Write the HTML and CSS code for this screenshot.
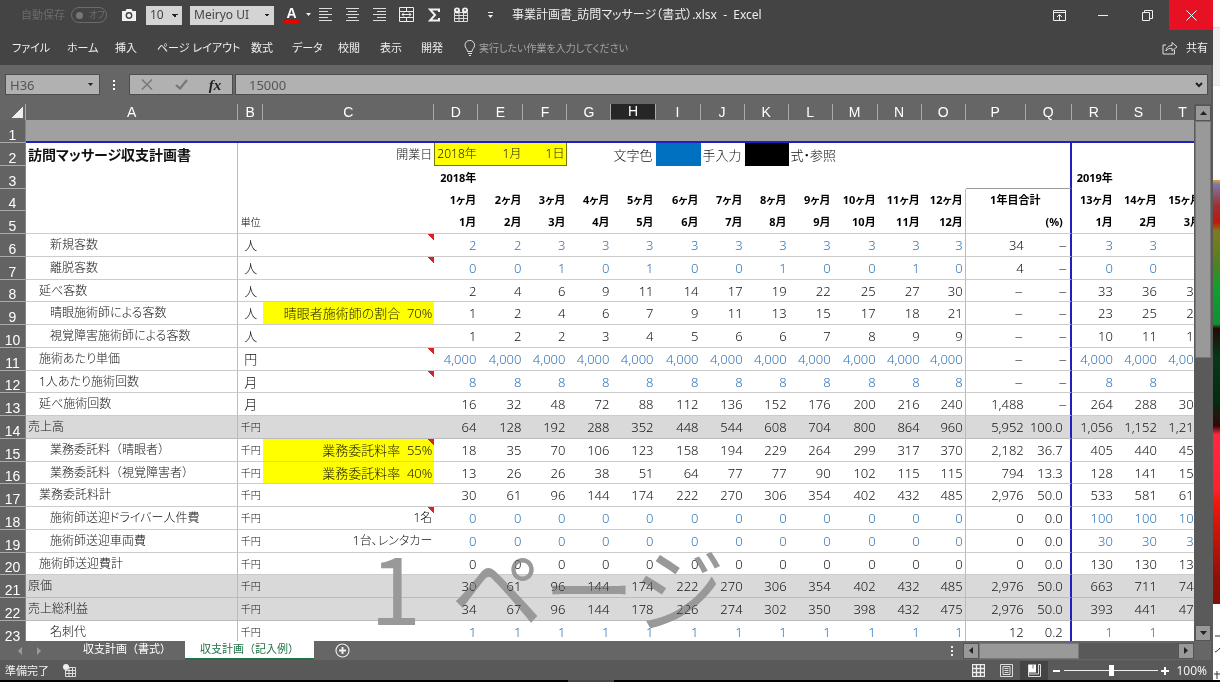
FILE: index.html
```html
<!DOCTYPE html>
<html lang="ja">
<head>
<meta charset="utf-8">
<title>事業計画書_訪問マッサージ（書式）.xlsx - Excel</title>
<link rel="stylesheet" href="styles.css">
</head>
<body>
<div class="desktop">
  <div class="window">
    <header class="titlebar">
      <div class="quick">
        <label class="autosave-label" for="autosave">自動保存</label>
        <span class="toggle"><input type="checkbox" id="autosave" disabled><span>オフ</span></span>
        <button class="icon" aria-label="カメラ"><svg width="16" height="14" viewBox="0 0 16 14"><path d="M1 3h3.5l1-2h5l1 2H15v10H1z" fill="#f2f2f2"/><circle cx="8" cy="7.5" r="3.4" fill="#444"/><circle cx="8" cy="7.5" r="2" fill="#f2f2f2"/></svg></button>
        <select class="size-select" aria-label="フォント サイズ"><option>10</option></select>
        <select class="font-select" aria-label="フォント"><option>Meiryo UI</option></select>
        <button class="icon font-color" aria-label="フォントの色">A</button>
        <button class="icon" aria-label="色の一覧"><svg width="6" height="4" viewBox="0 0 6 4"><path d="M0 0h5L2.500 3z" fill="#eee"/></svg></button>
        <button class="icon" aria-label="左揃え"><svg width="14" height="14" viewBox="0 0 14 14"><path d="M0 .5h13M0 3.500h9M0 6.500h13M0 9.500h9M0 12.500h13" stroke="#ddd"/></svg></button>
        <button class="icon" aria-label="中央揃え"><svg width="14" height="14" viewBox="0 0 14 14"><path d="M0 .5h13M2 3.500h9M0 6.500h13M2 9.500h9M0 12.500h13" stroke="#ddd"/></svg></button>
        <button class="icon" aria-label="右揃え"><svg width="14" height="14" viewBox="0 0 14 14"><path d="M0 .5h13M4 3.500h9M0 6.500h13M4 9.500h9M0 12.500h13" stroke="#ddd"/></svg></button>
        <button class="icon" aria-label="セルを結合"><svg width="16" height="16" viewBox="0 0 16 16" fill="none" stroke="#eee"><path d="M.5.5h14v14H.5zM.5 4.500h14M.5 10.500h14M7.500 .5v4M7.500 10.500v4M3 7.500h9M5 5.500l-2 2 2 2M10 5.500l2 2-2 2"/></svg></button>
        <button class="icon" aria-label="合計"><svg width="13" height="14" viewBox="0 0 13 14"><path d="M11 4V1.500H2L7 7l-5 5.500h9V10" fill="none" stroke="#f2f2f2" stroke-width="2"/></svg></button>
        <button class="icon" aria-label="ピボットテーブル"><svg width="17" height="16" viewBox="0 0 17 16"><path d="M1.500 5.500h13v9h-13zM1.500 8.500h13M1.500 11.500h13M6 5v10M10.500 5v10" fill="none" stroke="#ddd"/><circle cx="4" cy="3.500" r="3" fill="#eee"/><circle cx="12" cy="3.500" r="3" fill="#eee"/><circle cx="4" cy="3" r="1" fill="#555"/><circle cx="12" cy="3" r="1" fill="#555"/></svg></button>
        <button class="icon" aria-label="クイック アクセスのカスタマイズ"><svg width="6" height="7" viewBox="0 0 6 7"><path d="M0 .5h5" stroke="#eee"/><path d="M0 3h5L2.500 6z" fill="#eee"/></svg></button>
        <h1 class="doc-title">事業計画書_訪問マッサージ（書式）.xlsx&nbsp; -&nbsp; Excel</h1>
      </div>
      <div class="caption">
        <button aria-label="リボンの表示オプション"><svg width="13" height="11" viewBox="0 0 13 11" fill="none" stroke="#eee"><path d="M.5.5h12v10H.5zM.5 2.500h12M6.500 10V4.500M4 7l2.500-2.500L9 7"/></svg></button>
        <button aria-label="最小化"><svg width="11" height="3" viewBox="0 0 11 3"><path d="M0 1.500h10" stroke="#eee"/></svg></button>
        <button aria-label="元に戻す"><svg width="11" height="11" viewBox="0 0 11 11" fill="none" stroke="#eee"><path d="M.5 2.500h7v8h-7zM2.500 2.500v-2h8v8h-3"/></svg></button>
        <button class="close" aria-label="閉じる"><svg width="11" height="11" viewBox="0 0 11 11"><path d="M.5.5l10 10M10.500.5l-10 10" stroke="#fff"/></svg></button>
      </div>
    </header>

    <nav class="ribbon">
      <div class="tabs">
        <button>ファイル</button><button>ホーム</button><button>挿入</button><button>ページ レイアウト</button><button>数式</button><button>データ</button><button>校閲</button><button>表示</button><button>開発</button>
      </div>
      <label class="tell">
        <svg width="12" height="16" viewBox="0 0 12 16" fill="none" stroke="#ddd"><path d="M3.500 11.500C3.500 9 1 8 1 5.200a4.800 4.800 0 0 1 9.600 0C10.600 8 8 9 8 11.500zM4 13.500h4M5 15.500h2"/></svg>
        <input type="text" placeholder="実行したい作業を入力してください" aria-label="操作アシスト">
      </label>
      <button class="share"><svg width="17" height="15" viewBox="0 0 17 15" fill="none" stroke="#ddd"><path d="M4 5H1v9h11.500v-4M4 11c.5-4 3-5.500 6-5.500V2.500L15 6.800 10 11V8.300c-2.500 0-4.500.5-6 2.700z"/></svg>共有</button>
    </nav>

    <div class="formula">
      <div class="namebox"><input type="text" value="H36" aria-label="名前ボックス"><button aria-label="名前の一覧"><svg width="6" height="4" viewBox="0 0 6 4"><path d="M0 0h5L2.500 3z" fill="#222"/></svg></button></div>
      <svg class="dots" width="4" height="12" viewBox="0 0 4 12"><path d="M1 1h2v2H1zM1 5h2v2H1zM1 9h2v2H1z" fill="#fff"/></svg>
      <div class="fx">
        <button aria-label="キャンセル"><svg width="12" height="11" viewBox="0 0 12 11"><path d="M1 .5l10 10M11 .5l-10 10" stroke="#777" stroke-width="1.500"/></svg></button>
        <button aria-label="入力"><svg width="13" height="11" viewBox="0 0 13 11"><path d="M1 6l4 3.500L12 1" fill="none" stroke="#777" stroke-width="2.200"/></svg></button>
        <button class="fn" aria-label="関数の挿入">fx</button>
      </div>
      <div class="entry"><input type="text" value="15000" aria-label="数式バー"><button aria-label="数式バーの展開"><svg width="8" height="6" viewBox="0 0 8 6"><path d="M1 1l3 3 3-3" fill="none" stroke="#222" stroke-width="2"/></svg></button></div>
    </div>

    <main class="work">
      <div class="sheet">
        <table class="grid">
          <colgroup id="cols"></colgroup>
          <thead><tr id="letters"></tr></thead>
          <tbody id="rows"></tbody>
        </table>
        <div class="watermark"><span>1</span><span>ページ</span></div>
      </div>
      <div class="vscroll">
        <button aria-label="上へ"><svg width="7" height="4" viewBox="0 0 7 4"><path d="M0 4h7L3.500 0z" fill="#222"/></svg></button>
        <div class="vtrack"><div class="vthumb"></div></div>
        <button aria-label="下へ"><svg width="7" height="4" viewBox="0 0 7 4"><path d="M0 0h7L3.500 4z" fill="#222"/></svg></button>
      </div>
    </main>

    <div class="sheetbar">
      <div class="arrows">
        <button aria-label="前のシート"><svg width="5" height="8" viewBox="0 0 5 8"><path d="M4 0v8L0 4z" fill="#9a9a9a"/></svg></button>
        <button aria-label="次のシート"><svg width="5" height="8" viewBox="0 0 5 8"><path d="M0 0v8l4-4z" fill="#9a9a9a"/></svg></button>
      </div>
      <button class="tab">収支計画（書式）</button>
      <button class="tab active">収支計画（記入例）</button>
      <button class="add" aria-label="新しいシート"><svg width="15" height="15" viewBox="0 0 15 15" fill="none" stroke="#eee"><circle cx="7.500" cy="7.500" r="6.500" stroke-width="1.200"/><path d="M7.500 4v7M4 7.500h7" stroke-width="2"/></svg></button>
      <svg class="dots" width="4" height="12" viewBox="0 0 4 12"><path d="M1 1h2v2H1zM1 5h2v2H1zM1 9h2v2H1z" fill="#eee"/></svg>
      <div class="hscroll">
        <button aria-label="左へ"><svg width="4" height="7" viewBox="0 0 4 7"><path d="M4 0v7L0 3.500z" fill="#222"/></svg></button>
        <div class="htrack"><div class="hthumb"></div></div>
        <button aria-label="右へ"><svg width="4" height="7" viewBox="0 0 4 7"><path d="M0 0v7l4-3.500z" fill="#222"/></svg></button>
      </div>
    </div>

    <footer class="status">
      <span>準備完了</span>
      <button class="macro" aria-label="マクロの記録"><svg width="14" height="13" viewBox="0 0 14 13"><path d="M2.500 3.500h10v9h-10zM3 6.500h10M3 9.500h10M6 4v8M9.500 4v8" fill="none" stroke="#ddd"/><circle cx="3" cy="3" r="3" fill="#eee"/></svg></button>
      <div class="views">
        <button aria-label="標準"><svg width="13" height="13" viewBox="0 0 13 13"><path d="M.5.5h12v12H.5zM.5 4.500h12M.5 8.500h12M4.500.5v12M8.500.5v12" fill="none" stroke="#eee" stroke-width="1.300"/></svg></button>
        <button aria-label="ページ レイアウト"><svg width="13" height="13" viewBox="0 0 13 13" fill="none" stroke="#ddd"><path d="M.5.5h12v12H.5zM3 2.500h7v8H3zM4.500 4.500h4M4.500 6.500h4M4.500 8.500h4"/></svg></button>
        <button class="on" aria-label="改ページ プレビュー"><svg width="13" height="13" viewBox="0 0 13 13"><path d="M1 .5h7v8H1z" fill="#fff"/><path d="M5 .5v4" stroke="#777"/><path d="M.5 .5v12h12V.5h-2v9.500H.5" fill="none" stroke="#ddd"/></svg></button>
      </div>
      <div class="zoom">
        <button aria-label="縮小"><svg width="8" height="8" viewBox="0 0 8 8"><path d="M0 4h7" stroke="#fff" stroke-width="2"/></svg></button>
        <input type="range" min="0" max="100" value="50" aria-label="ズーム">
        <button aria-label="拡大"><svg width="8" height="8" viewBox="0 0 8 8"><path d="M0 4h8M4 0v8" stroke="#fff" stroke-width="2"/></svg></button>
        <span>100%</span>
      </div>
    </footer>
  </div>
  <aside class="behind">
    <div class="behind-top"></div>
    <div class="photo"></div>
    <svg class="scrap" width="7" height="76" viewBox="0 0 7 76" fill="none" stroke="#333"><path d="M2 32h5M2 48q3-1 5-4M1 70h6M4 67v8"/></svg>
  </aside>
</div>
<div class="taskbar"><span></span></div>
<script src="app.js"></script>
</body>
</html>
```
FILE: styles.css
```css
* { box-sizing: border-box; }
body {
  margin: 0;
  height: 100vh;
  display: flex;
  flex-direction: column;
  overflow: hidden;
  background: #000;
  color: #eee;
  font: 12px/16px "Noto Sans", "Noto Sans CJK JP", sans-serif;
  font-feature-settings: "palt";
}
button, input, select {
  font: inherit;
  font-feature-settings: inherit;
  color: inherit;
  background: none;
  border: 0;
  margin: 0;
  padding: 0;
  border-radius: 0;
  min-width: 0;
}
button { display: flex; align-items: center; justify-content: center; white-space: nowrap; }
svg { display: block; flex: none; }

.desktop { flex: 1; display: flex; min-height: 0; background: #fff; }
.window { flex: 1; min-width: 0; display: flex; flex-direction: column; background: #666; border-right: 2px solid #5a5a5a; }

/* Title bar */
.titlebar { display: flex; height: 30px; background: #444; margin-right: -2px; }
.quick {
  flex: 1;
  display: grid;
  grid-template-columns: 50px 50px 25px 44px 94px 22px 13px 27px 27px 26px 29px 25px 35px 24px 1fr;
  align-items: center;
  justify-items: start;
  padding-left: 21px;
}
.autosave-label { color: #6c6c6c; font-size: 11px; }
.toggle { display: flex; align-items: center; gap: 6px; width: 36px; height: 16px; padding: 0 4px; border: 1px solid #6c6c6c; border-radius: 8px; color: #6c6c6c; font-size: 9px; line-height: 12px; white-space: nowrap; }
.toggle input { appearance: none; flex: none; width: 7px; height: 7px; border-radius: 50%; background: #777; }
.size-select, .font-select {
  appearance: none;
  height: 19px;
  padding-left: 4px;
  color: #444;
  background: #d4d4d4 no-repeat;
  background-image: linear-gradient(to bottom right, #222 50%, transparent 50%), linear-gradient(to bottom left, #222 50%, transparent 50%);
  background-size: 3px 3px;
  background-position: right 4px center, right 7px center;
}
.size-select { width: 36px; }
.font-select { width: 84px; }
.font-color { width: 15px; height: 17px; color: #fff; font: bold 14px/13px "Liberation Sans", sans-serif; border-bottom: 4px solid #e80000; }
.doc-title { margin: 0; font-size: 12px; font-weight: 400; white-space: nowrap; }
.caption { display: flex; }
.caption button { width: 44px; height: 30px; }
.caption .close { background: #e81123; }

/* Ribbon tabs */
.ribbon { display: flex; align-items: center; height: 35px; background: #444; padding: 0 5px 0 12px; margin-right: -2px; }
.tabs { display: grid; grid-template-columns: 55px 48px 42px 94px 41px 46px 42px 41px 43px; justify-items: start; font-size: 11px; }
.tell { flex: 1; display: flex; align-items: center; gap: 3px; color: #aaa; font-size: 10px; }
.tell input { flex: 1; }
.tell input::placeholder { color: #a4a4a4; opacity: 1; }
.share { gap: 7px; font-size: 11px; }

/* Formula bar */
.formula { display: flex; align-items: center; height: 39px; padding: 0 3px 0 5px; color: #555; font-size: 13px; }
.namebox, .fx, .entry { display: flex; height: 21px; background: #b1b1b1; border: 1px solid #4e4e4e; }
.namebox { width: 95px; }
.namebox input { flex: 1; padding-left: 4px; }
.namebox button { width: 16px; }
.formula .dots { margin: 0 13px 0 12px; }
.fx { width: 104px; }
.fx button { flex: 1; }
.fx .fn { color: #222; font: italic bold 15px/16px "Liberation Serif", serif; }
.entry { flex: 1; margin-left: 2px; }
.entry input { flex: 1; padding-left: 13px; }
.entry button { width: 16px; }

/* Worksheet */
.work { flex: 1; display: flex; min-height: 0; }
.sheet { position: relative; flex: 1; min-width: 0; overflow: hidden; background: #fff; }
.grid { width: 1205px; table-layout: fixed; border-collapse: separate; border-spacing: 0; color: #111; font-size: 13px; }
.c-head { width: 26px; }
.c-a { width: 212px; }
.c-b { width: 25px; }
.c-c { width: 171px; }
.c-44 { width: 44px; }
.c-45 { width: 45px; }
.c-p { width: 60px; }
.c-q { width: 46px; }
.grid th, .grid td { padding: 0 2px; white-space: nowrap; line-height: 16px; text-align: right; }
.grid td { font-weight: 300; }
.grid thead th { height: 16px; padding: 0; background: #666; color: #fff; text-align: center; font: 14px/15px "Liberation Sans", sans-serif; border-right: 1px solid #aaa; }
.grid thead .selected { background: #262626; border-bottom: 1px solid #217346; }
.grid thead .corner { background: #666 linear-gradient(135deg, transparent 50%, #eee 50%) no-repeat right 2px bottom 2px / 11px 11px; }
.grid tbody tr { height: 23px; }
.grid tbody tr:nth-child(4n) { height: 22px; }
.grid tbody th { padding: 0; background: #636363; color: #fff; text-align: center; vertical-align: bottom; font: 14px/14px "Liberation Sans", sans-serif; border-bottom: 1px solid #aaa; border-right: 1px solid #7c7cc0; }
.grid td.a { text-align: left; font-size: 12px; border-right: 1px solid #bbb; }
.grid td.b { text-align: center; }
.grid td.o { border-right: 1px solid #bbb; }
.grid td.q { padding-right: 7px; border-right: 2px solid #2020c0; }
.grid td.r, .grid td.s, .grid td.t { padding-right: 4px; }
.grid .r1 td { background: #a0a0a0; border-right: 0; border-bottom: 2px solid #2020c0; }
.grid .line td { border-bottom: 1px solid #ccc; }
.grid .r1 td.o, .grid .r2 td.o, .grid .r3 td.o, .grid .r1 td.q { border-right: 0; }
.grid .r3 td.p, .grid .r3 td.q { border-bottom: 1px solid #999; }
.grid .sum td { background: #d9d9d9; border-bottom-color: #bbb; }
.grid .bold td { font-size: 11px; font-weight: 700; color: #000; }
.grid td.input { color: #2f72b8; }
.grid td.unit { font-size: 10px; }
.grid .bold td.unit { font-size: 10px; font-weight: 300; }
.grid td.i1 { padding-left: 13px; }
.grid td.i2 { padding-left: 24px; }
.grid td.wide { font-feature-settings: normal; }
.grid td.dash { color: #666; padding-right: 3px; font-size: 16px; }
.grid td.left { text-align: left; }
.grid td.heading { font-size: 14px; font-weight: 700; }
.grid td.center { text-align: center; }
.grid td.yellow { background-color: #ff0; color: #222200; }
.grid td.date { font-size: 12px; border-bottom: 1px solid #777700; }
.grid td.date.last { border-right: 1px solid #777700; }
.grid td.date.first { border-left: 1px solid #777700; }
.grid td.legend { padding-right: 4px; }
.grid td.small { font-size: 12px; }
.grid td.blue { background: #0070c0; }
.grid td.black { background: #000; }
.grid td.note { background-image: linear-gradient(45deg, transparent 50%, #e02020 50%); background-repeat: no-repeat; background-position: right top; background-size: 7px 6px; }
.watermark { position: absolute; left: 370px; top: 421px; display: flex; gap: 30px; color: #999; font: 400 92px/120px "Noto Sans CJK JP", sans-serif; font-feature-settings: normal; white-space: nowrap; mix-blend-mode: darken; pointer-events: none; }

/* Scroll bars */
.vscroll { width: 17px; display: flex; flex-direction: column; background: #5a5a5a; padding: 1px 0 0 1px; }
.vscroll button, .hscroll button { width: 16px; height: 16px; background: #999; border: 1px solid #555; }
.vtrack { flex: 1; }
.vthumb { height: 47%; background: #999; border: 1px solid #777; }

/* Sheet tabs */
.sheetbar { display: flex; align-items: center; height: 20px; padding-right: 17px; border-bottom: 1px solid #5a5a5a; }
.arrows { display: flex; gap: 14px; width: 69px; padding-left: 18px; }
.tab { align-self: stretch; width: 116px; align-items: flex-start; font-size: 11px; font-feature-settings: normal; color: #fff; }
.tab.active { width: 129px; background: #fff; color: #217346; border-bottom: 2px solid #217346; }
.add { margin-left: 21px; }
.sheetbar .dots { margin: 0 9px 0 auto; }
.hscroll { display: flex; width: 231px; background: #595959; }
.htrack { flex: 1; }
.hthumb { width: 50%; height: 16px; background: #999; border: 1px solid #777; }

/* Status bar */
.status { display: flex; align-items: center; height: 19px; padding: 0 4px 0 5px; background: #595959; font-size: 11px; color: #f2f2f2; }
.macro { margin-left: 14px; }
.views { display: flex; margin-left: auto; }
.views button { width: 28px; height: 19px; }
.views .on { background: #444; }
.zoom { display: flex; align-items: center; gap: 3px; margin-left: 5px; }
.zoom input { appearance: none; width: 94px; height: 13px; background: linear-gradient(#eee, #eee) no-repeat center / 100% 1px; }
.zoom input::-webkit-slider-thumb { appearance: none; width: 5px; height: 11px; background: #fff; }
.zoom span { margin-left: 4px; font-size: 12px; }

/* Neighbouring window and task bar */
.behind { width: 7px; display: flex; flex-direction: column; background: #fff; }
.behind-top { height: 180px; background: linear-gradient(#fff 27px, #ccc 27px, #f0f0f0 28px, #f0f0f0 85px, #ccc 85px, #fff 86px); }
.photo { flex: 1; background: linear-gradient(#e8a030 0, #7c78b0 1%, #a03030 6%, #c01808 10%, #807a20 12%, #508020 20%, #10a030 25%, #109030 34%, #200a08 35%, #063818 42%, #042c10 52%, #300808 58%, #ff2840 60%, #ff2030 73%, #f01808 76%, #901008 94%, #801008 100%); }
.taskbar { height: 2px; background: #000; }
.taskbar span { display: block; width: 46px; height: 2px; margin-left: 568px; background: #444; }
```
FILE: app.js
```js
const letters = 'ABCDEFGHIJKLMNOPQRST'.split('');
const widths = ['c-head', 'c-a', 'c-b', 'c-c',
  'c-44', 'c-45', 'c-44', 'c-44', 'c-44', 'c-45', 'c-44', 'c-44', 'c-44', 'c-45', 'c-44', 'c-44',
  'c-p', 'c-q', 'c-45', 'c-44', 'c-44'];

// label, indent, unit, column C, values D to T, row kind, has a comment
const data = [
  ['新規客数', 2, '人', '', '2 2 3 3 3 3 3 3 3 3 3 3 34 – 3 3 3', 'input', true],
  ['離脱客数', 2, '人', '', '0 0 1 0 1 0 0 1 0 0 1 0 4 – 0 0 1', 'input', true],
  ['延べ客数', 1, '人', '', '2 4 6 9 11 14 17 19 22 25 27 30 – – 33 36 38'],
  ['晴眼施術師による客数', 2, '人', '晴眼者施術師の割合\u00a0 70%', '1 2 4 6 7 9 11 13 15 17 18 21 – – 23 25 26'],
  ['視覚障害施術師による客数', 2, '人', '', '1 2 2 3 4 5 6 6 7 8 9 9 – – 10 11 12'],
  ['施術あたり単価', 1, '円', '', '4,000 4,000 4,000 4,000 4,000 4,000 4,000 4,000 4,000 4,000 4,000 4,000 – – 4,000 4,000 4,000', 'input', true],
  ['1人あたり施術回数', 1, '月', '', '8 8 8 8 8 8 8 8 8 8 8 8 – – 8 8 8', 'input', true],
  ['延べ施術回数', 1, '月', '', '16 32 48 72 88 112 136 152 176 200 216 240 1,488 – 264 288 304'],
  ['売上高', 0, '千円', '', '64 128 192 288 352 448 544 608 704 800 864 960 5,952 100.0 1,056 1,152 1,216', 'sum'],
  ['業務委託料（晴眼者）', 2, '千円', '業務委託料率\u00a0 55%', '18 35 70 106 123 158 194 229 264 299 317 370 2,182 36.7 405 440 458', '', true],
  ['業務委託料（視覚障害者）', 2, '千円', '業務委託料率\u00a0 40%', '13 26 26 38 51 64 77 77 90 102 115 115 794 13.3 128 141 154'],
  ['業務委託料計', 1, '千円', '', '30 61 96 144 174 222 270 306 354 402 432 485 2,976 50.0 533 581 612'],
  ['施術師送迎ドライバー人件費', 2, '千円', '1名', '0 0 0 0 0 0 0 0 0 0 0 0 0 0.0 100 100 100', 'input', true],
  ['施術師送迎車両費', 2, '千円', '1台、レンタカー', '0 0 0 0 0 0 0 0 0 0 0 0 0 0.0 30 30 30', 'input'],
  ['施術師送迎費計', 1, '千円', '', '0 0 0 0 0 0 0 0 0 0 0 0 0 0.0 130 130 130'],
  ['原価', 0, '千円', '', '30 61 96 144 174 222 270 306 354 402 432 485 2,976 50.0 663 711 743', 'sum'],
  ['売上総利益', 0, '千円', '', '34 67 96 144 178 226 274 302 350 398 432 475 2,976 50.0 393 441 473', 'sum'],
  ['名刺代', 2, '千円', '', '1 1 1 1 1 1 1 1 1 1 1 1 12 0.2 1 1 1', 'input']
];

document.getElementById('cols').innerHTML = widths.map(w => `<col class="${w}">`).join('');
document.getElementById('letters').innerHTML = '<th class="corner"></th>' +
  letters.map(l => `<th scope="col"${l === 'H' ? ' class="selected"' : ''}>${l}</th>`).join('');

function row(n, cls, cells) {
  const tds = letters.map(l => {
    const [text = '', extra = ''] = cells[l] || [];
    return `<td class="${l.toLowerCase()} ${extra}">${text}</td>`;
  }).join('');
  return `<tr class="r${n} ${cls}"><th scope="row">${n}</th>${tds}</tr>`;
}

const months = 'DEFGHIJKLMNO'.split('');
const elapsed = { R: ['13ヶ月'], S: ['14ヶ月'], T: ['15ヶ月'] };
const calendar = { B: ['単位', 'unit'], Q: ['(%)'], R: ['1月'], S: ['2月'], T: ['3月'] };
months.forEach((l, i) => {
  elapsed[l] = [`${i + 1}ヶ月`];
  calendar[l] = [`${i + 1}月`];
});

let html = row(1, '', {});
html += row(2, '', {
  A: ['訪問マッサージ収支計画書', 'heading'], C: ['開業日', 'small'],
  D: ['2018年', 'yellow date first'], E: ['1月', 'yellow date'], F: ['1日', 'yellow date last'],
  H: ['文字色', 'legend'], I: ['', 'blue'], J: ['手入力', 'left'],
  K: ['', 'black'], L: ['式・参照', 'left']
});
html += row(3, 'bold', { D: ['2018年'], R: ['2019年'] });
html += row(4, 'bold', elapsed)
  .replace(/<td class="p ">.*?<\/td><td class="q ">/, '<td class="q center" colspan="2">1年目合計');
html += row(5, 'bold line', calendar);

data.forEach(([label, indent, unit, c, values, kind, note], i) => {
  const cells = {
    A: [label, `left i${indent}${label.includes('（') ? ' wide' : ''}`],
    B: [unit, unit === '千円' ? 'unit' : ''],
    C: [c, (c.includes('%') ? 'yellow ' : 'small ') + (note ? 'note' : '')]
  };
  values.split(' ').forEach((v, k) => {
    const l = letters[k + 3];
    cells[l] = [v, v === '–' ? 'dash' : kind === 'input' && l !== 'P' && l !== 'Q' ? 'input' : ''];
  });
  html += row(i + 6, 'line ' + (kind === 'sum' ? 'sum' : ''), cells);
});
document.getElementById('rows').innerHTML = html;
```
